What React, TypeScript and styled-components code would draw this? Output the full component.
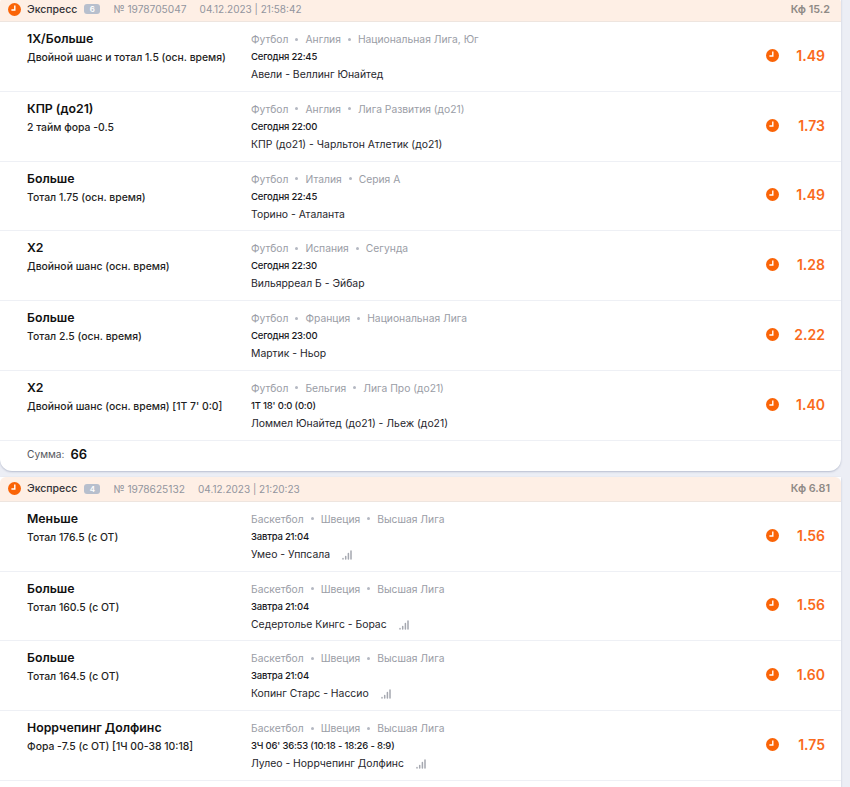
import { Fragment } from "react";
import styled, { createGlobalStyle } from "styled-components";

const Global = createGlobalStyle`
  html, body {
    margin: 0;
    height: 787px;
    overflow: hidden;
    background: #eceef5;
    font-family: Inter, "Noto Sans", sans-serif;
  }
`;

const Page = styled.div`
  width: 841px;
  margin-top: -3px;
  display: flex;
  flex-direction: column;
  gap: 6px;
`;

const Card = styled.div`
  background: #fff;
  border-radius: 0 0 12px 12px;
  box-shadow: 0 1px 2px rgba(120, 130, 160, 0.45);
  overflow: hidden;
`;

const Head = styled.div`
  height: 24px;
  display: flex;
  align-items: center;
  background: #feefe5;
  border-bottom: 1px solid #eee5df;
  border-radius: 6px 6px 0 0;
  padding: 0 11px 0 8px;
  font-size: 10.2px;
  color: #92959e;
`;

const Kind = styled.span`
  margin-left: 6px;
  font-size: 10.5px;
  font-weight: 500;
  color: #333338;
`;

const Count = styled.span`
  width: 16px;
  height: 10px;
  margin: 0 13px 0 7px;
  border-radius: 3px;
  background: #b7bfcd;
  color: #fff;
  font-size: 8px;
  font-weight: 600;
  line-height: 10px;
  text-align: center;
`;

const Stamp = styled.span`
  margin-left: 13px;
  font-size: 10px;
`;

const Coef = styled.span`
  margin-left: auto;
  color: #8f8a86;
  font-weight: 600;
  font-size: 10.8px;
`;

const Row = styled.div`
  height: 68.8px;
  display: grid;
  grid-template-columns: 224px 1fr auto 62px;
  padding-left: 27px;
  border-bottom: 1px solid #eef0f5;
`;

const Pick = styled.div`
  padding-top: 9px;
`;

const Title = styled.div`
  font-size: 12.3px;
  line-height: 16px;
  font-weight: 600;
  color: #111;
`;

const Market = styled.div`
  margin-top: 3px;
  font-size: 10.4px;
  line-height: 16px;
  font-weight: 500;
  color: #1f1f24;
`;

const Info = styled.div`
  padding-top: 10px;
`;

const Crumbs = styled.div`
  display: flex;
  align-items: center;
  font-size: 10.3px;
  line-height: 14px;
  color: #9a9da6;
`;

const Dot = styled.span`
  width: 3px;
  height: 3px;
  margin: 0 7px;
  border-radius: 50%;
  background: #b4b8c2;
`;

const When = styled.div`
  margin-top: 4px;
  font-size: 9.5px;
  line-height: 14px;
  font-weight: 500;
  letter-spacing: -0.2px;
  color: #17171c;
`;

const Match = styled.div`
  margin-top: 3px;
  display: flex;
  align-items: center;
  font-size: 10.4px;
  line-height: 16px;
  color: #26262c;
`;

const Stats = styled.svg`
  margin-left: 12px;
  width: 10px;
  height: 10px;
  fill: none;
  stroke: #a5a8b0;
  stroke-width: 1.5;
  stroke-linecap: round;
`;

const Status = styled.div`
  display: flex;
  align-items: center;
  padding-bottom: 2px;
`;

const Odd = styled.div`
  display: flex;
  align-items: center;
  justify-content: flex-end;
  padding: 0 16px 2px 0;
  font-size: 14px;
  font-weight: 600;
  color: #fa6a1c;
`;

const Total = styled.div`
  height: 30px;
  display: flex;
  align-items: center;
  padding: 0 0 3px 27px;
  box-sizing: border-box;
  font-size: 10.2px;
  color: #55575e;
`;

const Sum = styled.span`
  margin-left: 6px;
  font-size: 13px;
  font-weight: 600;
  color: #111;
`;

const Clock = () => (
  <svg width="13" height="13" viewBox="0 0 13 13">
    <circle cx="6.5" cy="6.5" r="6.5" fill="#fa6407" />
    <path d="M6.8 2.6V7H3.4" fill="none" stroke="#fff" strokeWidth="1.4" />
  </svg>
);

type Bet = {
  title: string;
  market: string;
  crumbs: string[];
  when: string;
  match: string;
  odd: string;
  stats?: boolean;
};

type Slip = {
  count: number;
  id: string;
  date: string;
  coef: string;
  sum?: string;
  bets: Bet[];
};

const slips: Slip[] = [
  {
    count: 6,
    id: "№ 1978705047",
    date: "04.12.2023 | 21:58:42",
    coef: "Кф 15.2",
    sum: "66",
    bets: [
      { title: "1Х/Больше", market: "Двойной шанс и тотал 1.5 (осн. время)", crumbs: ["Футбол", "Англия", "Национальная Лига, Юг"], when: "Сегодня 22:45", match: "Авели - Веллинг Юнайтед", odd: "1.49" },
      { title: "КПР (до21)", market: "2 тайм фора -0.5", crumbs: ["Футбол", "Англия", "Лига Развития (до21)"], when: "Сегодня 22:00", match: "КПР (до21) - Чарльтон Атлетик (до21)", odd: "1.73" },
      { title: "Больше", market: "Тотал 1.75 (осн. время)", crumbs: ["Футбол", "Италия", "Серия А"], when: "Сегодня 22:45", match: "Торино - Аталанта", odd: "1.49" },
      { title: "Х2", market: "Двойной шанс (осн. время)", crumbs: ["Футбол", "Испания", "Сегунда"], when: "Сегодня 22:30", match: "Вильярреал Б - Эйбар", odd: "1.28" },
      { title: "Больше", market: "Тотал 2.5 (осн. время)", crumbs: ["Футбол", "Франция", "Национальная Лига"], when: "Сегодня 23:00", match: "Мартик - Ньор", odd: "2.22" },
      { title: "Х2", market: "Двойной шанс (осн. время) [1Т 7' 0:0]", crumbs: ["Футбол", "Бельгия", "Лига Про (до21)"], when: "1Т 18' 0:0 (0:0)", match: "Ломмел Юнайтед (до21) - Льеж (до21)", odd: "1.40" },
    ],
  },
  {
    count: 4,
    id: "№ 1978625132",
    date: "04.12.2023 | 21:20:23",
    coef: "Кф 6.81",
    bets: [
      { title: "Меньше", market: "Тотал 176.5 (с ОТ)", crumbs: ["Баскетбол", "Швеция", "Высшая Лига"], when: "Завтра 21:04", match: "Умео - Уппсала", odd: "1.56", stats: true },
      { title: "Больше", market: "Тотал 160.5 (с ОТ)", crumbs: ["Баскетбол", "Швеция", "Высшая Лига"], when: "Завтра 21:04", match: "Седертолье Кингс - Борас", odd: "1.56", stats: true },
      { title: "Больше", market: "Тотал 164.5 (с ОТ)", crumbs: ["Баскетбол", "Швеция", "Высшая Лига"], when: "Завтра 21:04", match: "Копинг Старс - Нассио", odd: "1.60", stats: true },
      { title: "Норрчепинг Долфинс", market: "Фора -7.5 (с ОТ) [1Ч 00-38 10:18]", crumbs: ["Баскетбол", "Швеция", "Высшая Лига"], when: "3Ч 06' 36:53 (10:18 - 18:26 - 8:9)", match: "Лулео - Норрчепинг Долфинс", odd: "1.75", stats: true },
    ],
  },
];

export default function App() {
  return (
    <>
      <Global />
      <Page>
        {slips.map((slip) => (
          <Card key={slip.id}>
            <Head>
              <Clock />
              <Kind>Экспресс</Kind>
              <Count>{slip.count}</Count>
              <span>{slip.id}</span>
              <Stamp>{slip.date}</Stamp>
              <Coef>{slip.coef}</Coef>
            </Head>
            {slip.bets.map((bet, i) => (
              <Row key={i}>
                <Pick>
                  <Title>{bet.title}</Title>
                  <Market>{bet.market}</Market>
                </Pick>
                <Info>
                  <Crumbs>
                    {bet.crumbs.map((c, j) => (
                      <Fragment key={c}>
                        {j > 0 && <Dot />}
                        {c}
                      </Fragment>
                    ))}
                  </Crumbs>
                  <When>{bet.when}</When>
                  <Match>
                    {bet.match}
                    {bet.stats && (
                      <Stats viewBox="0 0 10 10">
                        <path d="M1 8.5v.5M3.7 6.5V9M6.4 3.5V9M9 1v8" />
                      </Stats>
                    )}
                  </Match>
                </Info>
                <Status>
                  <Clock />
                </Status>
                <Odd>{bet.odd}</Odd>
              </Row>
            ))}
            <Total>
              {slip.sum && (
                <>
                  Сумма:
                  <Sum>{slip.sum}</Sum>
                </>
              )}
            </Total>
          </Card>
        ))}
      </Page>
    </>
  );
}
